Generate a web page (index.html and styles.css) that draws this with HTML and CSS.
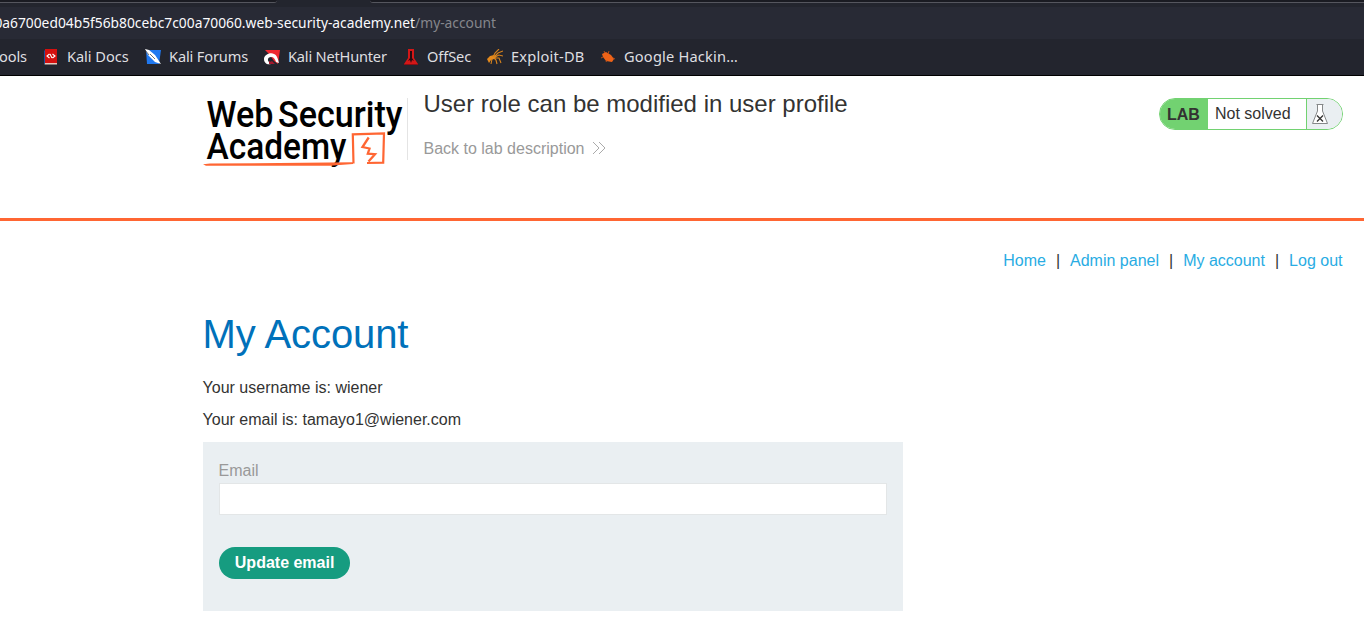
FILE: index.html
```
<!DOCTYPE html>
<html lang="en">
<head>
<meta charset="utf-8">
<title>User role can be modified in user profile</title>
<link rel="stylesheet" href="styles.css">
</head>
<body>
<div class="browser">
  <div class="tabstrip"><div class="tab-edge tab-left"></div><div class="tab-edge tab-right"></div></div>
  <div class="urlbar"><span class="url"><span class="host">0a6700ed04b5f56b80cebc7c00a70060.web-security-academy.net</span>/my-account</span></div>
  <div class="bookmarks">
    <span class="bm bm-tools"><span class="bm-text">ools</span></span>
    <span class="bm bm-docs"><svg class="ico" viewBox="0 0 16 16"><path d="M1 2 3 0v14l-2 1z" fill="#1d4f9c"/><path d="M2 0h12v14H2z" fill="#d4100f"/><path d="M2 14h12v1.600H1.500z" fill="#e6c9bd"/><path d="M6.500 5 4 7l2.500 2M9.500 5l2.500 2-2.500 2M7 5l2 4" fill="none" stroke="#fff" stroke-width="1.100"/></svg><span class="bm-text">Kali Docs</span></span>
    <span class="bm bm-forums"><svg class="ico" viewBox="0 0 16 16"><path d="M1 1h15l-2 14H2z" fill="#1f78f0"/><path d="M0 0l4 1 6 5 2 3 4 6-6-2-4-4-3-3z" fill="#fff"/><path d="M0 1l4 5M5 5l5 5" stroke="#30343d" stroke-width=".7"/></svg><span class="bm-text">Kali Forums</span></span>
    <span class="bm bm-hunter"><svg class="ico" viewBox="0 0 16 16"><path d="M1 1h15l-2 14-4-3L5 5z" fill="#ee2930"/><path d="M0 10C0 6 6 3 10 5c3 1 4 5 5 9l-3-1c-1-3-2-5-5-5-3 0-4 3-2 5l2 1v1c-4 1-7-1-7-5z" fill="#fff"/><path d="M5 11c0 2 2 2 3 1l3 3H5z" fill="#a3182c"/></svg><span class="bm-text">Kali NetHunter</span></span>
    <span class="bm bm-offsec"><svg class="ico" viewBox="0 0 16 16"><path d="M5 0h6v9l4 6H1l4-6z" fill="#d31717"/><path d="M7 2h2v7l2 3-2-1-1 3-1-3-2 1 2-3z" fill="#240c12"/><path d="M1 15.500h14" stroke="#8d0e14"/></svg><span class="bm-text">OffSec</span></span>
    <span class="bm bm-exploit"><svg class="ico" viewBox="0 0 16 16"><path d="M0 10l3-3 4-1 2 2-2 2-3 1-2 3z" fill="#e58a1c"/><path d="M6 8 8 4l4-4M7 8l4-4 5-2M8 8l4-2 4 1M8 9l4 0 2 5M7 9l2 2 1 4M5 10l-1 5" fill="none" stroke="#d9841d" stroke-width="1.100"/></svg><span class="bm-text">Exploit-DB</span></span>
    <span class="bm bm-google"><svg class="ico" viewBox="0 0 16 16"><path d="M2 5l4-2 5 3 3 4-2 3-6-1-3-4z" fill="#ee6318"/><path d="M5 4 4 2M8 5l1-3M3 8 1 9M7 11l-1 2M13 9l2 1" stroke="#c95116" stroke-width=".9"/></svg><span class="bm-text">Google Hackin…</span></span>
  </div>
</div>
<header class="lab-header">
  <svg class="logo" viewBox="203 94 202 76">
    <g class="logo-text">
      <text x="206.500" y="126.500" textLength="67" lengthAdjust="spacingAndGlyphs">Web</text>
      <text x="278" y="126.500" textLength="124.500" lengthAdjust="spacingAndGlyphs">Security</text>
      <text x="206.500" y="159" textLength="140" lengthAdjust="spacingAndGlyphs">Academy</text>
    </g>
    <path d="M203 164.300 210 163.600 353 162.200V164L330 165.700H206z" fill="#ff6633"/>
    <path d="M353.500 163.500 352.800 134.300 384 133.300 383.200 162.600 367 163" fill="none" stroke="#ff6633" stroke-width="2.200"/>
    <path d="M368.700 137.500 362.500 147 369.500 148.500 367.800 153.700 375 154.200 368.500 161.500" fill="none" stroke="#ff6633" stroke-width="2.300"/>
  </svg>
  <div class="title-block">
    <h2 class="title">User role can be modified in user profile</h2>
    <a class="back">Back to lab description<svg class="chevrons" viewBox="0 0 14 14"><path d="M1 1l6 6-6 6M7 1l6 6-6 6" fill="none" stroke="#aaa" stroke-width="1"/></svg></a>
  </div>
  <div class="status">
    <span class="lab">LAB</span><span class="state">Not solved</span>
    <span class="flask"><svg class="flask-svg" viewBox="0 0 18 22"><path d="M5.500 1.500h7M6.500 2v6L1.500 20.500h15L11.500 8V2" fill="#fff" stroke="#858889"/><path d="M6 12.500l6 6M12 12.500l-6 6" stroke="#333332" stroke-width="1.300"/></svg></span>
  </div>
</header>
<main class="page">
  <nav class="nav"><a>Home</a><span>|</span><a>Admin panel</a><span>|</span><a>My account</a><span>|</span><a>Log out</a></nav>
  <section class="account">
    <h1 class="heading">My Account</h1>
    <p class="line">Your username is: wiener</p>
    <p class="line">Your email is: tamayo1@wiener.com</p>
    <form class="form">
      <label class="label" for="email">Email</label>
      <input class="input" id="email" type="email">
      <button class="button" type="button">Update email</button>
    </form>
  </section>
</main>
</body>
</html>
```
FILE: styles.css
```
* { box-sizing: border-box; }
body { margin: 0; height: 644px; overflow: hidden; background: #fff; color: #333332; font: 16px/24px "Liberation Sans", Arial, sans-serif; }
.browser { height: 76px; background: #23252e; border-bottom: 1px solid #000; font-family: "Noto Sans", sans-serif; overflow: hidden; }
.tabstrip { height: 7px; display: flex; justify-content: space-between; }
.tab-edge { height: 3px; background: #1a1b22; border-bottom: 1px solid #55565e; }
.tab-left { width: 277px; border-bottom-right-radius: 4px; }
.tab-right { width: 994px; border-bottom-left-radius: 4px; }
.urlbar { height: 32px; background: #282a35; display: flex; align-items: center; }
.url { width: 496px; flex: none; display: flex; justify-content: flex-end; white-space: nowrap; font-size: 13.8px; color: #85868c; }
.host { color: #fbfbfe; }
.bookmarks { height: 36px; display: flex; align-items: center; color: #dfdfe0; font-size: 14.6px; }
.bm { flex: none; display: flex; align-items: center; white-space: nowrap; }
.bm-text { padding-bottom: 3px; }
.bm-tools { width: 43px; margin-left: -1px; margin-right: 1px; letter-spacing: -0.1px; }
.bm-docs { width: 102px; letter-spacing: -0.05px; }
.bm-forums { width: 119px; letter-spacing: -0.15px; }
.bm-hunter { width: 139px; letter-spacing: -0.2px; }
.bm-offsec { width: 84px; letter-spacing: -0.1px; }
.bm-exploit { width: 113px; letter-spacing: 0.22px; }
.bm-google { letter-spacing: 0.2px; }
.ico { width: 16px; height: 16px; margin-right: 8px; }
.lab-header { height: 145px; border-bottom: 3px solid #ff6633; display: flex; padding-left: 203px; }
.logo { width: 202px; height: 76px; margin-top: 18px; flex: none; overflow: visible; }
.logo-text { font: 500 37.5px Roboto, sans-serif; fill: #000; }
.title-block { margin: 22px 0 0 2px; height: 62px; padding-left: 15.5px; border-left: 1px solid #e4e4e4; flex: 1; }
.title { margin: -8px 0 0; font-size: 24px; line-height: 28px; font-weight: 400; }
.back { display: flex; align-items: center; margin-top: 19px; line-height: 24px; color: #999; }
.chevrons { width: 14px; height: 14px; margin: -2px 0 0 7.5px; }
.status { display: flex; width: 184px; height: 32px; margin: 22px 21px 0 0; border: 1px solid #72d271; border-radius: 16px; overflow: hidden; line-height: 30px; }
.lab { width: 48px; padding-left: 7px; background: #72d271; font-weight: 700; line-height: 32px; }
.state { width: 99px; padding-left: 7px; border-right: 1px solid #72d271; }
.flask { flex: 1; background: #eaeff2; padding: 4px 0 0 4px; }
.flask-svg { width: 18px; height: 22px; display: block; }
.nav { display: flex; justify-content: flex-end; gap: 10px; padding: 28px 21.5px 0 0; color: #333332; }
.nav a { color: #29ace3; }
.account { width: 700px; margin: 38px 0 0 202.6px; }
.heading { margin: 0; font-size: 40px; line-height: 46px; font-weight: 400; letter-spacing: -0.1px; color: #0071ba; }
.line { margin: 0 0 8px; }
.heading + .line { margin-top: 19px; }
.form { height: 169px; margin-top: 10px; padding: 17px 16px 16px; background: #eaeff2; }
.label { display: block; color: #999; }
.input { display: block; width: 668px; height: 32px; margin-top: 0; border: 1px solid #e3e6e7; background: #fff; padding: 4px 8px; }
.button { display: block; width: 131px; height: 32px; margin-top: 32px; padding: 0 0 0 1px; border: 0; border-radius: 16px; background: #169c80; color: #fff; font: 700 16px/32px "Liberation Sans", Arial, sans-serif; }
```
